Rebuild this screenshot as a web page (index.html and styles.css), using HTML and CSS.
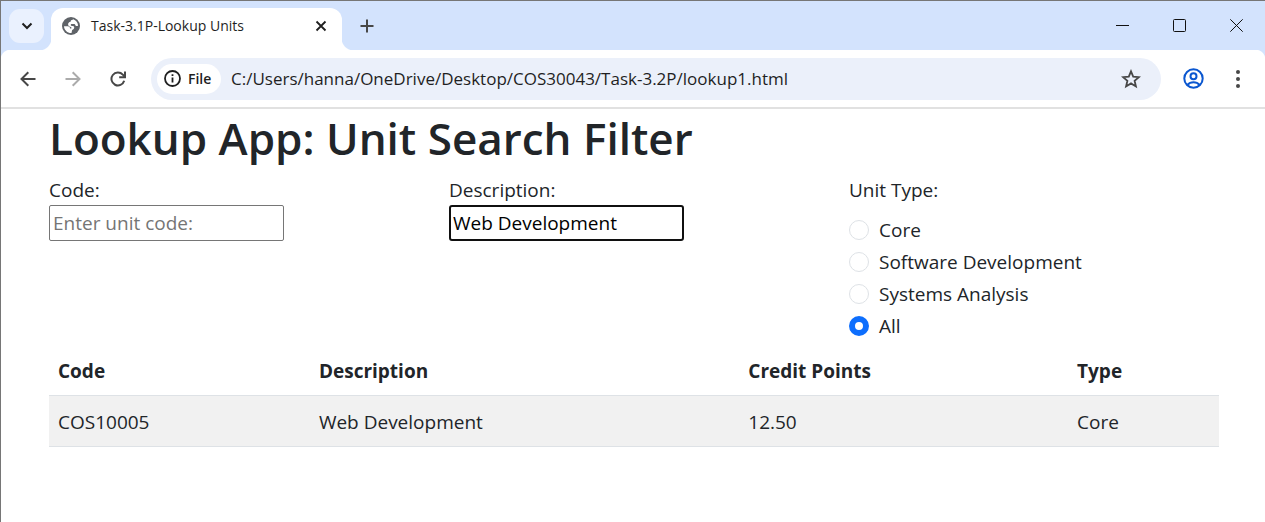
FILE: index.html
```html
<!DOCTYPE html>
<html lang="en">
<head>
<meta charset="utf-8">
<meta name="viewport" content="width=device-width, initial-scale=1">
<title>Task-3.1P-Lookup Units</title>
<link rel="stylesheet" href="styles.css">
</head>
<body>
<div class="window">
  <header class="tab-strip">
    <button class="tab-search" type="button" aria-label="Search tabs">
      <svg width="12" height="8" viewBox="0 0 12 8"><path d="M1.500 1.500 6 6l4.500-4.500" fill="none" stroke="#1f1f1f" stroke-width="2"/></svg>
    </button>
    <div class="tab">
      <svg class="tab-icon" width="18" height="18" viewBox="0 0 18 18"><circle cx="9" cy="9" r="9" fill="#5f6368"/><path d="M11.300 2.300c2.500.9 4.500 3.200 4.800 6.200-.7.700-1.600.8-2.400.2-.5-.5-.5-1.300-1.300-1.600H9.800c-.9 0-1.300.7-.9 1.300.4.500 1.500.3 2.300.7 1 .5 1.300 1.500.8 2.500-.4.900-1.400.9-1.900 1.600-.3.600-.2 1.800-.6 2.800-4 .2-7.300-2.800-7.500-6.800h3.800c1.400 0 2.200.8 2.200 2.200h1.300c.4-.5.100-1.200-.6-1.400-1.300-.4-2.500-1-2.600-2.400-.1-1.600.9-2.700 2.500-2.900.1-1.200.8-1.800 2-1.900z" fill="#fff"/></svg>
      <span class="tab-title">Task-3.1P-Lookup Units</span>
      <button class="icon-button" type="button" aria-label="Close tab">
        <svg width="12" height="12" viewBox="0 0 12 12"><path d="m1.500 1.500 9 9m0-9-9 9" stroke="#1f1f1f" stroke-width="1.800"/></svg>
      </button>
    </div>
    <button class="icon-button new-tab" type="button" aria-label="New tab">
      <svg width="14" height="14" viewBox="0 0 14 14"><path d="M7 .5v13M.5 7h13" stroke="#474747" stroke-width="2"/></svg>
    </button>
    <div class="window-controls">
      <button class="icon-button" type="button" aria-label="Minimize"><svg width="13" height="13" viewBox="0 0 13 13"><path d="M0 6.500h13" stroke="#111"/></svg></button>
      <button class="icon-button" type="button" aria-label="Maximize"><svg width="13" height="13" viewBox="0 0 13 13"><rect x=".5" y=".5" width="12" height="12" rx="1" fill="none" stroke="#111"/></svg></button>
      <button class="icon-button" type="button" aria-label="Close"><svg width="13" height="13" viewBox="0 0 13 13"><path d="m.3.3 12.400 12.400m0-12.400L.3 12.700" stroke="#111"/></svg></button>
    </div>
  </header>

  <nav class="toolbar" aria-label="Browser">
    <div class="nav-buttons">
      <button class="icon-button" type="button" aria-label="Back"><svg width="16" height="16" viewBox="0 0 16 16"><path d="M15.500 8H2M8.300 1.200 1.500 8l6.800 6.800" fill="none" stroke="#474747" stroke-width="2"/></svg></button>
      <button class="icon-button" type="button" aria-label="Forward"><svg width="16" height="16" viewBox="0 0 16 16"><path d="M.5 8H14M7.700 1.200 14.500 8l-6.800 6.800" fill="none" stroke="#ababab" stroke-width="2"/></svg></button>
      <button class="icon-button" type="button" aria-label="Reload"><svg width="16" height="16" viewBox="0 0 16 16"><path d="M14.200 9.800A6.500 6.500 0 1 1 12.800 3.600L14.500 5.500" fill="none" stroke="#474747" stroke-width="2"/><path d="M15 .5V6.300H9.200" fill="none" stroke="#474747" stroke-width="2"/></svg></button>
    </div>
    <div class="address-bar">
      <button class="site-chip" type="button">
        <svg width="17" height="17" viewBox="0 0 17 17"><circle cx="8.500" cy="8.500" r="7.500" fill="none" stroke="#1f1f1f" stroke-width="1.800"/><path d="M8.500 7.500v5M8.500 4.300v1.800" stroke="#1f1f1f" stroke-width="1.800"/></svg>
        <span>File</span>
      </button>
      <input class="url" type="text" aria-label="Address" value="C:/Users/hanna/OneDrive/Desktop/COS30043/Task-3.2P/lookup1.html">
      <button class="icon-button" type="button" aria-label="Bookmark this page"><svg width="20" height="20" viewBox="0 0 20 20"><path d="m10 2.300 2.200 5.300 5.700.5-4.300 3.700 1.300 5.600-4.900-3-4.900 3 1.300-5.600-4.300-3.700 5.700-.5z" fill="none" stroke="#474747" stroke-width="1.800"/></svg></button>
    </div>
    <button class="icon-button profile" type="button" aria-label="Profile"><svg width="21" height="21" viewBox="0 0 21 21"><g fill="none" stroke="#0b57d0" stroke-width="2"><circle cx="10.500" cy="10.500" r="9.200"/><circle cx="10.500" cy="8.300" r="3"/><path d="M4.300 17c1.600-1.800 3.700-2.800 6.200-2.800s4.600 1 6.200 2.800"/></g></svg></button>
    <button class="icon-button" type="button" aria-label="Menu"><svg width="4" height="18" viewBox="0 0 4 18"><g fill="#474747"><circle cx="2" cy="2" r="2"/><circle cx="2" cy="9" r="2"/><circle cx="2" cy="16" r="2"/></g></svg></button>
  </nav>

  <main class="page">
    <h1 class="page-title">Lookup App: Unit Search Filter</h1>
    <form class="filters">
      <div class="field">
        <label for="code">Code:</label>
        <input class="text-input" id="code" type="text" placeholder="Enter unit code:">
      </div>
      <div class="field">
        <label for="description">Description:</label>
        <input class="text-input active" id="description" type="text" value="Web Development">
      </div>
      <fieldset class="unit-types">
        <legend>Unit Type:</legend>
        <div class="option"><input id="core" type="radio" name="type"><label for="core">Core</label></div>
        <div class="option"><input id="software" type="radio" name="type"><label for="software">Software Development</label></div>
        <div class="option"><input id="systems" type="radio" name="type"><label for="systems">Systems Analysis</label></div>
        <div class="option"><input id="all" type="radio" name="type" checked><label for="all">All</label></div>
      </fieldset>
    </form>
    <table class="units">
      <colgroup><col class="col-code"><col class="col-description"><col class="col-points"><col></colgroup>
      <thead><tr><th>Code</th><th>Description</th><th>Credit Points</th><th>Type</th></tr></thead>
      <tbody><tr><td>COS10005</td><td>Web Development</td><td>12.50</td><td>Core</td></tr></tbody>
    </table>
  </main>
</div>
</body>
</html>
```
FILE: styles.css
```css
* { box-sizing: border-box; }

body {
  margin: 0;
  color: #212529;
  background: #fff;
  font: 19px/30px "Segoe UI", "Open Sans", "Noto Sans", sans-serif;
}

button, input { font: inherit; color: inherit; }

svg { display: block; flex: none; }

.window {
  min-height: 100vh;
  border: solid #767676;
  border-width: 1px 0 0 1px;
}

.icon-button {
  display: grid;
  place-items: center;
  flex: none;
  width: 30px;
  height: 30px;
  padding: 0;
  border: 0;
  background: none;
}

.tab-strip {
  display: flex;
  align-items: center;
  height: 49px;
  padding: 0 14px 0 8px;
  background: #d3e3fd;
}

.tab-search {
  display: grid;
  place-items: center;
  width: 35px;
  height: 34px;
  padding: 0;
  border: 0;
  border-radius: 11px;
  background: #eaf1fe;
}

.tab {
  position: relative;
  display: flex;
  align-items: center;
  align-self: flex-end;
  width: 291px;
  height: 42px;
  margin-left: 7px;
  padding: 0 6px 7px 11px;
  border-radius: 12px 12px 0 0;
  background: #fff;
}

.tab::before, .tab::after {
  content: "";
  position: absolute;
  bottom: 0;
  width: 12px;
  height: 12px;
}

.tab::before { right: 100%; background: radial-gradient(circle at 0 0, transparent 12px, #fff 13px); }
.tab::after { left: 100%; background: radial-gradient(circle at 100% 0, transparent 12px, #fff 13px); }

.tab-search { position: relative; z-index: 1; }

.tab-title {
  flex: 1;
  margin-left: 11px;
  font-size: 14px;
  line-height: 20px;
  color: #1f1f1f;
}

.new-tab { margin-left: 10px; }

.window-controls {
  display: flex;
  gap: 27px;
  margin-left: auto;
}

.toolbar {
  display: flex;
  align-items: center;
  height: 59px;
  padding: 0 12px;
  border-bottom: 2px solid #e1e1e1;
  background:
    radial-gradient(circle at 10px 10px, transparent 10px, #d3e3fd 11px) 0 0 / 10px 10px no-repeat,
    radial-gradient(circle at 0 10px, transparent 10px, #d3e3fd 11px) 100% 0 / 10px 10px no-repeat,
    #fff;
}

.nav-buttons { display: flex; gap: 15px; }

.address-bar {
  display: flex;
  align-items: center;
  flex: 1;
  height: 42px;
  margin-left: 18px;
  padding: 0 15px 0 6px;
  border-radius: 21px;
  background: #ebf0fa;
}

.site-chip {
  display: flex;
  align-items: center;
  gap: 7px;
  width: 64px;
  height: 30px;
  padding: 0 7px;
  border: 0;
  border-radius: 15px;
  background: #fff;
  font-size: 14px;
  font-weight: 600;
  line-height: 20px;
  color: #1f1f1f;
}

.url {
  flex: 1;
  min-width: 0;
  margin-left: 10px;
  padding: 0;
  border: 0;
  background: none;
  font-size: 17px;
  color: #1f1f1f;
}

.profile { margin: 0 15px 0 17px; }

.page { padding: 0 46px 0 48px; }

.page-title {
  margin: 0;
  padding-bottom: 8px;
  font-size: 44px;
  font-weight: 600;
  line-height: 58px;
}

.filters {
  display: grid;
  grid-template-columns: repeat(3, 1fr);
  gap: 30px;
  margin-bottom: 2px;
}

.field {
  display: flex;
  flex-direction: column;
  align-items: flex-start;
}

.text-input {
  width: 235px;
  max-width: 100%;
  height: 36px;
  padding: 0 3px;
  border: 1px solid #767676;
  border-radius: 2px;
  background: #fff;
}

.text-input::placeholder { color: #757575; opacity: 1; }

.text-input.active {
  padding: 0 2px;
  border: 2px solid #101010;
  border-radius: 3px;
  outline: 0;
  color: #000;
}

.unit-types {
  min-width: 0;
  margin: 0;
  padding: 0;
  border: 0;
}

.unit-types legend { padding: 0 0 10px; }

.option {
  display: flex;
  align-items: center;
  gap: 10px;
  margin-bottom: 2px;
}

.option input {
  appearance: none;
  width: 20px;
  height: 20px;
  margin: 0;
  border: 1px solid #dee2e6;
  border-radius: 50%;
  background: #fff;
}

.option input:checked { border: 6px solid #0d6efd; }

.units {
  width: 100%;
  table-layout: fixed;
  border-collapse: collapse;
}

.col-code { width: 22.3%; }
.col-description { width: 36.7%; }
.col-points { width: 28.1%; }

.units th, .units td {
  padding: 11px 9px 9px;
  border-bottom: 1px solid #dee2e6;
  text-align: left;
}

.units th { font-weight: 700; }
.units td { background: #f1f1f1; }
```
